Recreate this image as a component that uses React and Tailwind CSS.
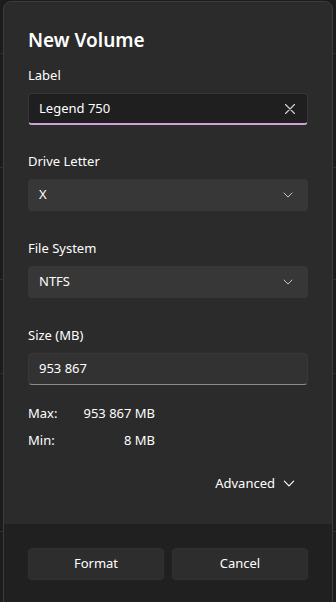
const font = { fontFamily: '"Noto Sans", "Liberation Sans", sans-serif' };

function Chevron({ className = "", w = 10, h = 6 }) {
  return (
    <svg width={w} height={h} viewBox="0 0 10 6" className={className} fill="none">
      <path d="M1 1l4 4 4-4" stroke="currentColor" strokeWidth="1" strokeLinecap="round" strokeLinejoin="round" />
    </svg>
  );
}

function ClearIcon() {
  return (
    <svg width="10" height="10" viewBox="0 0 10 10" fill="none">
      <path d="M0.5 0.5l9 9M9.5 0.5l-9 9" stroke="currentColor" strokeWidth="1.2" strokeLinecap="round" />
    </svg>
  );
}

function FieldLabel({ children }) {
  return <p className="text-[13px] leading-5 text-white">{children}</p>;
}

function Combo({ value }) {
  return (
    <div className="mt-2 flex h-8 items-center justify-between rounded-[4px] bg-[#373737] pl-[11px] pr-[15px] text-[13px] text-white">
      <span>{value}</span>
      <Chevron className="text-[#c8c8c8]" />
    </div>
  );
}

export default function App() {
  const rows = [54, 114, 112, 94, 158];
  return (
    <div className="relative h-[602px] w-[336px] overflow-hidden bg-[#1c1c1c]" style={font}>
      {/* app behind the dialog */}
      <div className="flex flex-col">
        {rows.map((h, i) => (
          <div key={i} className="border-b border-[#2f2f2f]" style={{ height: h }} />
        ))}
      </div>

      <div className="absolute left-[3px] top-[1px] flex h-[612px] w-[330px] flex-col overflow-hidden rounded-[8px] border border-[#3c3c3c] bg-[#2b2b2b]">
        <div className="flex flex-col px-6 pt-6">
          <h1 className="text-[19px] font-semibold leading-7 text-white">New Volume</h1>

          <div className="mt-[11px]">
            <FieldLabel>Label</FieldLabel>
            <div className="mt-2 flex h-8 items-center justify-between rounded-[4px] border border-[#363636] border-b-2 border-b-[#d2a0dc] bg-[#1f1f1f] pl-[10px] pr-[12px] text-[13px] text-white">
              <span>Legend 750</span>
              <span className="text-[#cfcfcf]">
                <ClearIcon />
              </span>
            </div>
          </div>

          <div className="mt-[26px]">
            <FieldLabel>Drive Letter</FieldLabel>
            <Combo value="X" />
          </div>

          <div className="mt-[27px]">
            <FieldLabel>File System</FieldLabel>
            <Combo value="NTFS" />
          </div>

          <div className="mt-[27px]">
            <FieldLabel>Size (MB)</FieldLabel>
            <div className="mt-2 flex h-8 items-center rounded-[4px] border border-[#383838] border-b-[#8a8a8a] bg-[#323232] pl-[10px] text-[13px] text-white">
              953 867
            </div>
          </div>

          <div className="mt-[18px] grid w-fit grid-cols-[auto_auto] gap-x-[26px] gap-y-[7px] text-[13px] leading-5 text-white">
            <span>Max:</span>
            <span className="text-right">953 867 MB</span>
            <span>Min:</span>
            <span className="text-right">8 MB</span>
          </div>

          <div className="mt-[23px] flex items-center justify-end gap-[8px] pr-[13px] text-[13px] leading-5 text-white">
            <span>Advanced</span>
            <Chevron className="text-white" w={12} h={7} />
          </div>
        </div>

        <div className="mt-[31px] flex flex-1 gap-2 bg-[#202020] px-6 pt-[24px]">
          <button className="h-8 flex-1 rounded-[4px] border border-[#303030] bg-[#2d2d2d] text-[13px] text-white">
            Format
          </button>
          <button className="h-8 flex-1 rounded-[4px] border border-[#303030] bg-[#2d2d2d] text-[13px] text-white">
            Cancel
          </button>
        </div>
      </div>
    </div>
  );
}
